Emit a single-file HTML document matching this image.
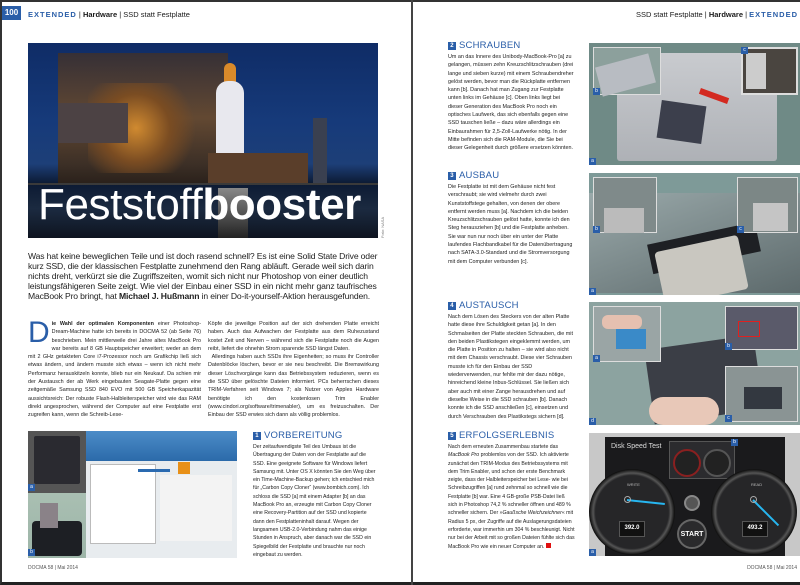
<!DOCTYPE html>
<html><head><meta charset="utf-8"><style>
*{margin:0;padding:0;box-sizing:border-box}
body{width:800px;height:585px;background:#fff;position:relative;overflow:hidden;font-family:"Liberation Sans",sans-serif;color:#1a1a1a}
.a{position:absolute}
.frame{border-top:2px solid #333;border-bottom:3px solid #222;border-left:2px solid #333;left:0;top:0;width:800px;height:585px}
.hd{font-size:7.5px;top:10px;white-space:nowrap}
.hd b{font-weight:bold}
.ext{color:#2a5ea8;font-weight:bold;letter-spacing:1px}
.t{font-size:5.4px;line-height:8.3px;text-align:justify;color:#222}
.h{font-size:9.5px;color:#2a5ea8;letter-spacing:.2px}
.h i{display:inline-block;width:8px;height:8px;background:#2a5ea8;color:#fff;font-style:normal;font-size:6px;text-align:center;line-height:8px;vertical-align:1px;margin-right:3px;font-weight:bold}
.lbl{position:absolute;width:7px;height:7px;background:#2a5ea8;color:#fff;font-size:5px;line-height:7px;text-align:center}
.ft{font-size:5px;color:#555;top:565px}
</style></head><body>
<div class="a frame"></div>
<div class="a" style="left:411px;top:0;width:2px;height:585px;background:#444"></div>

<div class="a" style="left:2px;top:6px;width:19px;height:14px;background:#2a5ea8;color:#fff;font-size:8px;font-weight:bold;line-height:14px;text-align:center">100</div>
<div class="a hd" style="left:28px"><span class="ext">EXTENDED</span> | <b>Hardware</b> | SSD statt Festplatte</div>

<div class="a" style="left:28px;top:43px;width:350px;height:195px;overflow:hidden;background:linear-gradient(180deg,#0f2c66 0%,#163a7a 40%,#1d3f78 62%,#0c1a33 72%,#1b2a40 85%,#0e1420 100%)">
 <div class="a" style="left:30px;top:10px;width:170px;height:130px;background:linear-gradient(180deg,#3a3030,#6b4a2a 50%,#2e2218);opacity:.9"></div>
 <div class="a" style="left:60px;top:40px;width:120px;height:90px;background:radial-gradient(circle at 40% 50%,#d08a30 0,#7a4c22 40%,transparent 70%)"></div>
 <div class="a" style="left:30px;top:60px;width:70px;height:40px;background:#4c4244"></div>
 <div class="a" style="left:196px;top:20px;width:12px;height:45px;background:#d98a2a;border-radius:6px 6px 0 0"></div>
 <div class="a" style="left:188px;top:38px;width:28px;height:90px;background:#e8e8ee;border-radius:12px 12px 2px 2px"></div>
 <div class="a" style="left:180px;top:110px;width:100px;height:30px;background:#5a3e2a"></div>
 <div class="a" style="left:285px;top:75px;width:14px;height:65px;background:#3a4050"></div>
 <div class="a" style="left:0;top:140px;width:350px;height:2px;background:#3a3a3a"></div>
 <div class="a" style="left:190px;top:145px;width:30px;height:50px;background:linear-gradient(180deg,#888,#222)"></div>
 <div class="a" style="left:10px;top:134px;font-size:44px;color:#fff;line-height:56px;letter-spacing:-.4px;white-space:nowrap">Feststoff<b>booster</b></div>
</div>
<div class="a" style="left:380px;top:238px;font-size:4px;color:#777;transform:rotate(-90deg);transform-origin:left top;white-space:nowrap">Foto: NASA</div>

<div class="a" style="left:28px;top:252px;width:356px;font-size:8.6px;line-height:9.9px;letter-spacing:-.15px;color:#222">Was hat keine beweglichen Teile und ist doch rasend schnell? Es ist eine Solid State Drive oder kurz SSD, die der klassischen Festplatte zunehmend den Rang abläuft. Gerade weil sich darin nichts dreht, verkürzt sie die Zugriffszeiten, womit sich nicht nur Photoshop von einer deutlich leistungsfähigeren Seite zeigt. Wie viel der Einbau einer SSD in ein nicht mehr ganz taufrisches MacBook Pro bringt, hat <b>Michael J. Hußmann</b> in einer Do-it-yourself-Aktion herausgefunden.</div>

<div class="a t" style="left:28px;top:320px;width:173px"><span style="float:left;font-size:30px;line-height:26px;color:#2a5ea8;margin-right:2px">D</span><b>ie Wahl der optimalen Komponenten</b> einer Photoshop-Dream-Machine hatte ich bereits in DOCMA 52 (ab Seite 76) beschrieben. Mein mittlerweile drei Jahre altes MacBook Pro war bereits auf 8 GB Hauptspeicher erweitert; weder an dem mit 2 GHz getakteten Core i7-Prozessor noch am Grafikchip ließ sich etwas ändern, und ändern musste sich etwas – wenn ich nicht mehr Performanz herauskitzeln konnte, blieb nur ein Neukauf. Da schien mir der Austausch der ab Werk eingebauten Seagate-Platte gegen eine zeitgemäße Samsung SSD 840 EVO mit 500 GB Speicherkapazität aussichtsreich: Der robuste Flash-Halbleiterspeicher wird wie das RAM direkt angesprochen, während der Computer auf eine Festplatte erst zugreifen kann, wenn die Schreib-Lese-</div>
<div class="a t" style="left:208px;top:320px;width:171px">Köpfe die jeweilige Position auf der sich drehenden Platte erreicht haben. Auch das Aufwachen der Festplatte aus dem Ruhezustand kostet Zeit und Nerven – während sich die Festplatte noch die Augen reibt, liefert die ohnehin Strom sparende SSD längst Daten.<br>&nbsp;&nbsp;Allerdings haben auch SSDs ihre Eigenheiten; so muss ihr Controller Datenblöcke löschen, bevor er sie neu beschreibt. Die Bremswirkung dieser Löschvorgänge kann das Betriebssystem reduzieren, wenn es die SSD über gelöschte Dateien informiert. PCs beherrschen dieses TRIM-Verfahren seit Windows 7; als Nutzer von Apples Hardware benötigte ich den kostenlosen Trim Enabler (www.cindori.org/software/trimenabler), um es freizuschalten. Der Einbau der SSD erwies sich dann als völlig problemlos.</div>

<div class="a" style="left:28px;top:431px;width:209px;height:127px;background:#ddd;overflow:hidden">
 <div class="a" style="left:0;top:0;width:58px;height:62px;background:#555"><div class="a" style="left:6px;top:5px;width:46px;height:48px;background:#2a2a30;border-radius:2px"></div></div>
 <div class="a" style="left:0;top:62px;width:58px;height:65px;background:linear-gradient(180deg,#a9bfb2,#9db5a8)"><div class="a" style="left:4px;top:28px;width:50px;height:35px;background:#1d1f24;border-radius:4px"></div><div class="a" style="left:12px;top:10px;width:18px;height:25px;background:#8a8288"></div></div>
 <div class="lbl" style="left:0;top:53px">a</div><div class="lbl" style="left:0;top:118px">b</div>
 <div class="a" style="left:58px;top:0;width:151px;height:127px;background:#e8ecef">
  <div class="a" style="left:0;top:0;width:151px;height:30px;background:linear-gradient(180deg,#4c8cc8,#2b6aaa)"></div>
  <div class="a" style="left:4px;top:33px;width:66px;height:80px;background:#fff;border:1px solid #bbb"></div>
  <div class="a" style="left:74px;top:44px;width:72px;height:66px;background:#f3f3f3"></div>
  <div class="a" style="left:52px;top:38px;width:32px;height:3px;background:#2a6ab0"></div>
  <div class="a" style="left:92px;top:31px;width:12px;height:12px;background:#e89018"></div>
 </div>
</div>
<div class="a h" style="left:253px;top:430px"><i>1</i>VORBEREITUNG</div>
<div class="a t" style="left:253px;top:443px;width:126px;text-align:left;font-size:5.2px">Der zeitaufwendigste Teil des Umbaus ist die Übertragung der Daten von der Festplatte auf die SSD. Eine geeignete Software für Windows liefert Samsung mit. Unter OS X könnten Sie den Weg über ein Time-Machine-Backup gehen; ich entschied mich für „Carbon Copy Cloner“ (www.bombich.com). Ich schloss die SSD [a] mit einem Adapter [b] an das MacBook Pro an, erzeugte mit Carbon Copy Cloner eine Recovery-Partition auf der SSD und kopierte dann den Festplatteninhalt darauf. Wegen der langsamen USB-2.0-Verbindung nahm das einige Stunden in Anspruch, aber danach war die SSD ein Spiegelbild der Festplatte und brauchte nur noch eingebaut zu werden.</div>
<div class="a ft" style="left:28px">DOCMA 58 | Mai 2014</div>

<div class="a hd" style="right:2px">SSD statt Festplatte | <b>Hardware</b> | <span class="ext">EXTENDED</span></div>

<div class="a h" style="left:448px;top:40px"><i>2</i>SCHRAUBEN</div>
<div class="a t" style="left:448px;top:53px;width:127px;text-align:left">Um an das Innere des Unibody-MacBook-Pro [a] zu gelangen, müssen zehn Kreuzschlitzschrauben (drei lange und sieben kurze) mit einem Schraubendreher gelöst werden, bevor man die Rückplatte entfernen kann [b]. Danach hat man Zugang zur Festplatte unten links im Gehäuse [c]. Oben links liegt bei dieser Generation des MacBook Pro noch ein optisches Laufwerk, das sich ebenfalls gegen eine SSD tauschen ließe – dazu wäre allerdings ein Einbaurahmen für 2,5-Zoll-Laufwerke nötig. In der Mitte befinden sich die RAM-Module, die Sie bei dieser Gelegenheit durch größere ersetzen könnten.</div>
<div class="a" style="left:589px;top:43px;width:211px;height:122px;background:#6f8a86;overflow:hidden">
 <div class="a" style="left:28px;top:10px;width:160px;height:108px;background:linear-gradient(180deg,#c9cbcf,#aeb1b6);border-radius:3px"></div>
 <div class="a" style="left:70px;top:60px;width:45px;height:38px;background:#3c3f4c;transform:rotate(8deg)"></div>
 <div class="a" style="left:110px;top:50px;width:30px;height:6px;background:#d32a20;transform:rotate(20deg)"></div>
 <div class="a" style="left:4px;top:4px;width:68px;height:48px;background:#8ca09c;border:1px solid #ddd"><div class="a" style="left:4px;top:12px;width:55px;height:30px;background:#b8bcc2;transform:rotate(-15deg)"></div></div>
 <div class="a" style="left:152px;top:4px;width:57px;height:48px;background:#4a4540;border:2px solid #ddd"><div class="a" style="left:3px;top:4px;width:20px;height:36px;background:#ccc"></div></div>
 <div class="lbl" style="left:0;top:115px">a</div><div class="lbl" style="left:4px;top:45px">b</div><div class="lbl" style="left:152px;top:4px">c</div>
</div>

<div class="a h" style="left:448px;top:170px"><i>3</i>AUSBAU</div>
<div class="a t" style="left:448px;top:183px;width:127px;text-align:left">Die Festplatte ist mit dem Gehäuse nicht fest verschraubt; sie wird vielmehr durch zwei Kunststoffstege gehalten, von denen der obere entfernt werden muss [a]. Nachdem ich die beiden Kreuzschlitzschrauben gelöst hatte, konnte ich den Steg herausziehen [b] und die Festplatte anheben. Sie war nun nur noch über ein unter der Platte laufendes Flachbandkabel für die Datenübertragung nach SATA-3.0-Standard und die Stromversorgung mit dem Computer verbunden [c].</div>
<div class="a" style="left:589px;top:173px;width:211px;height:122px;background:#7e9a98;overflow:hidden">
 <div class="a" style="left:0;top:20px;width:211px;height:100px;background:linear-gradient(160deg,#9aa9aa,#5d6a6c)"></div>
 <div class="a" style="left:60px;top:60px;width:110px;height:30px;background:#1e2024;transform:rotate(-12deg)"></div>
 <div class="a" style="left:70px;top:70px;width:85px;height:55px;background:#c9c7c0;border-radius:4px;transform:rotate(-12deg)"></div>
 <div class="a" style="left:4px;top:4px;width:64px;height:56px;background:#7f8a8a;border:1px solid #ddd"><div class="a" style="left:10px;top:30px;width:40px;height:25px;background:#bbb"></div></div>
 <div class="a" style="left:148px;top:4px;width:61px;height:56px;background:#7c8786;border:1px solid #ddd"><div class="a" style="left:15px;top:25px;width:35px;height:28px;background:#c5c5c5"></div></div>
 <div class="lbl" style="left:0;top:115px">a</div><div class="lbl" style="left:4px;top:53px">b</div><div class="lbl" style="left:148px;top:53px">c</div>
</div>

<div class="a h" style="left:448px;top:300px"><i>4</i>AUSTAUSCH</div>
<div class="a t" style="left:448px;top:313px;width:127px;text-align:left">Nach dem Lösen des Steckers von der alten Platte hatte diese ihre Schuldigkeit getan [a]. In den Schmalseiten der Platte steckten Schrauben, die mit den beiden Plastikstegen eingeklemmt werden, um die Platte in Position zu halten – sie wird also nicht mit dem Chassis verschraubt. Diese vier Schrauben musste ich für den Einbau der SSD wiederverwenden, nur fehlte mir der dazu nötige, hinreichend kleine Inbus-Schlüssel. Sie ließen sich aber auch mit einer Zange herausdrehen und auf dieselbe Weise in die SSD schrauben [b]. Danach konnte ich die SSD anschließen [c], einsetzen und durch Verschrauben des Plastikstegs sichern [d].</div>
<div class="a" style="left:589px;top:302px;width:211px;height:123px;background:#8ca3a0;overflow:hidden">
 <div class="a" style="left:60px;top:40px;width:110px;height:75px;background:#3b3e46;transform:rotate(-8deg)"></div>
 <div class="a" style="left:60px;top:95px;width:70px;height:28px;background:#e8c8b8;border-radius:14px"></div>
 <div class="a" style="left:4px;top:4px;width:68px;height:56px;background:#9aa5a5;border:1px solid #ddd"><div class="a" style="left:22px;top:22px;width:30px;height:20px;background:#3a8ac8"></div><div class="a" style="left:8px;top:8px;width:40px;height:14px;background:#e5c0b0;border-radius:6px"></div></div>
 <div class="a" style="left:136px;top:4px;width:73px;height:44px;background:#5a5a6a;border:1px solid #ddd"><div class="a" style="left:12px;top:14px;width:22px;height:16px;border:1.5px solid #e02020"></div></div>
 <div class="a" style="left:136px;top:64px;width:73px;height:56px;background:#8a9494;border:1px solid #ddd"><div class="a" style="left:18px;top:20px;width:38px;height:22px;background:#333840"></div></div>
 <div class="lbl" style="left:0;top:116px">d</div><div class="lbl" style="left:4px;top:53px">a</div><div class="lbl" style="left:136px;top:41px">b</div><div class="lbl" style="left:136px;top:113px">c</div>
</div>

<div class="a h" style="left:448px;top:430px"><i>5</i>ERFOLGSERLEBNIS</div>
<div class="a t" style="left:448px;top:443px;width:127px;text-align:left;font-size:5.2px">Nach dem erneuten Zusammenbau startete das <i>MacBook Pro</i> problemlos von der SSD. Ich aktivierte zunächst den TRIM-Modus des Betriebssystems mit dem Trim Enabler, und schon der erste Benchmark zeigte, dass der Halbleiterspeicher bei Lese- wie bei Schreibzugriffen [a] rund zehnmal so schnell wie die Festplatte [b] war. Eine 4 GB-große PSB-Datei ließ sich in Photoshop 74,2 % schneller öffnen und 489 % schneller sichern. Der »<i>Gaußsche Weichzeichner</i>« mit Radius 5 px, der Zugriffe auf die Auslagerungsdateien erforderte, war immerhin um 304 % beschleunigt. Nicht nur bei der Arbeit mit so großen Dateien fühlte sich das MacBook Pro wie ein neuer Computer an. <span style="display:inline-block;width:5px;height:5px;background:#e01010"></span></div>
<div class="a" style="left:589px;top:433px;width:211px;height:123px;background:#c8c8c8;overflow:hidden">
 <div class="a" style="left:16px;top:4px;width:180px;height:119px;background:#1a1a1c"></div>
 <div class="a" style="left:22px;top:10px;font-size:7px;color:#ddd">Disk Speed Test</div>
 <div class="a" style="left:80px;top:8px;width:66px;height:38px;background:#2b2b2e;border:1px solid #555"></div>
 <div class="a" style="left:84px;top:16px;width:28px;height:28px;border-radius:50%;border:2px solid #8a2020;background:#222"></div>
 <div class="a" style="left:114px;top:16px;width:28px;height:28px;border-radius:50%;border:2px solid #555;background:#222"></div>
 <div class="a" style="left:0;top:36px;width:86px;height:86px;border-radius:50%;background:radial-gradient(circle,#262628 60%,#555 64%,#111 70%)"></div>
 <div class="a" style="left:122px;top:36px;width:86px;height:86px;border-radius:50%;background:radial-gradient(circle,#262628 60%,#555 64%,#111 70%)"></div>
 <div class="a" style="left:38px;top:66px;width:38px;height:2px;background:#27b6f0;transform:rotate(6deg);transform-origin:left"></div>
 <div class="a" style="left:164px;top:66px;width:36px;height:2px;background:#27b6f0;transform:rotate(45deg);transform-origin:left"></div>
 <div class="a" style="left:35px;top:63px;width:7px;height:7px;border-radius:50%;border:1px solid #aaa"></div>
 <div class="a" style="left:161px;top:63px;width:7px;height:7px;border-radius:50%;border:1px solid #aaa"></div>
 <div class="a" style="left:38px;top:49px;font-size:4px;color:#bbb">WRITE</div>
 <div class="a" style="left:162px;top:49px;font-size:4px;color:#bbb">READ</div>
 <div class="a" style="left:30px;top:88px;width:26px;height:16px;background:#111;border:1px solid #555;color:#fff;font-size:6px;font-weight:bold;text-align:center;line-height:12px">392.0</div>
 <div class="a" style="left:153px;top:88px;width:26px;height:16px;background:#111;border:1px solid #555;color:#fff;font-size:6px;font-weight:bold;text-align:center;line-height:12px">493.2</div>
 <div class="a" style="left:88px;top:86px;width:30px;height:30px;border-radius:50%;background:#2a2a2c;border:2px solid #666;color:#fff;font-size:7px;font-weight:bold;text-align:center;line-height:28px">START</div>
 <div class="a" style="left:95px;top:62px;width:16px;height:16px;border-radius:50%;background:#555;border:2px solid #888"></div>
 <div class="lbl" style="left:0;top:116px">a</div><div class="lbl" style="left:142px;top:6px">b</div>
</div>
<div class="a ft" style="right:3px">DOCMA 58 | Mai 2014</div>
</body></html>
